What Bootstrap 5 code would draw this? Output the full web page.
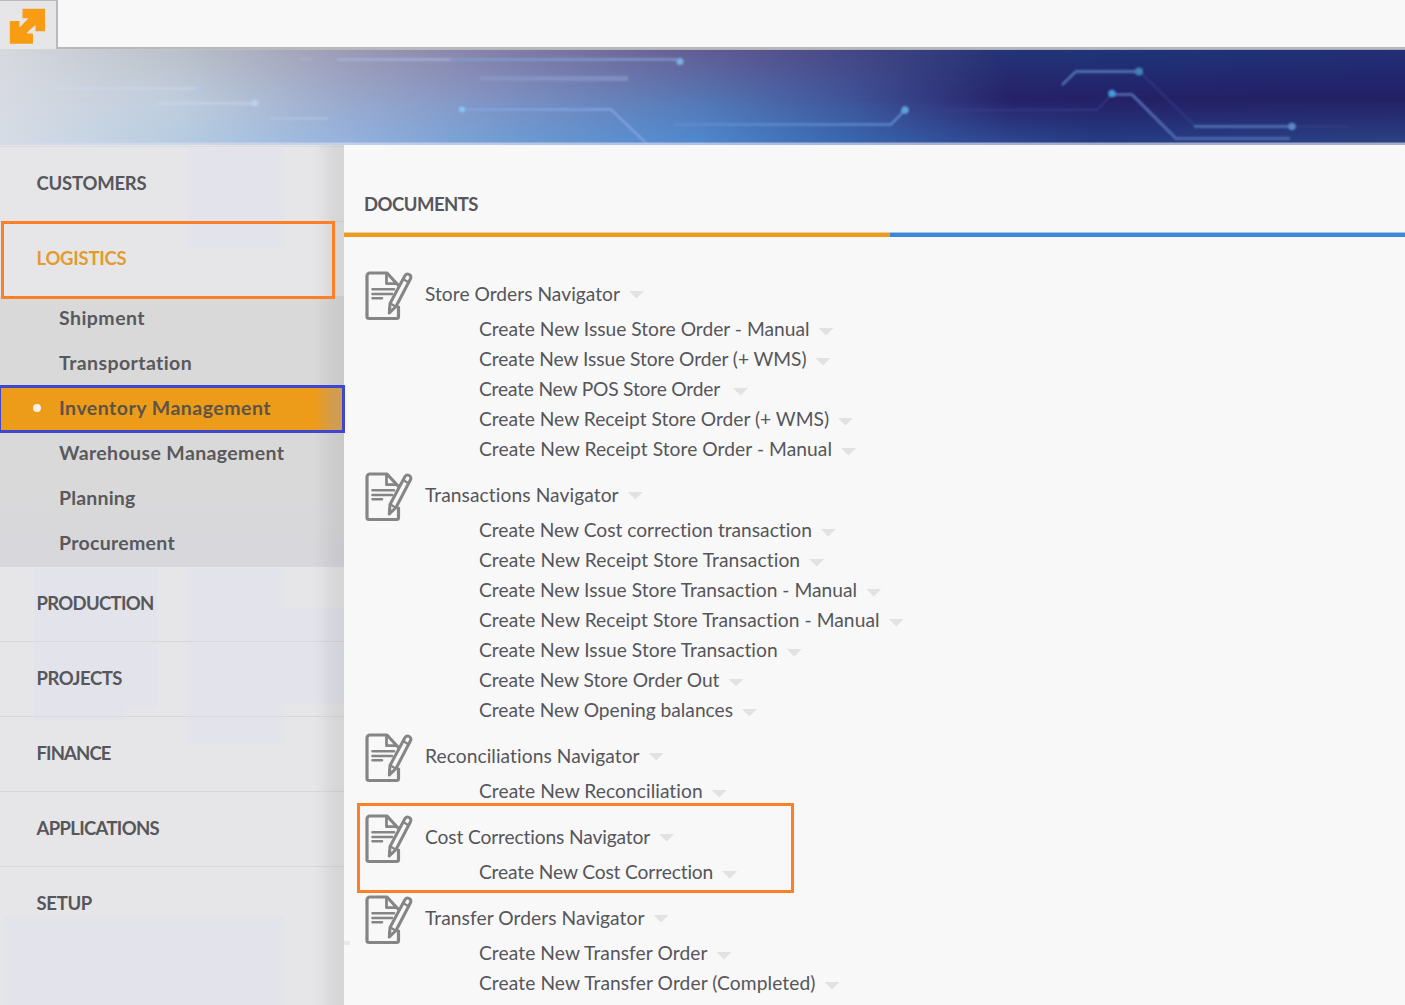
<!DOCTYPE html>
<html lang="en">
<head>
<meta charset="utf-8">
<meta name="viewport" content="width=device-width, initial-scale=1">
<title>Inventory Management</title>
<link href="https://cdn.jsdelivr.net/npm/bootstrap@5.3.0/dist/css/bootstrap.min.css" rel="stylesheet">
<style>
  body { font-family: Lato, "Open Sans", sans-serif; background: #f8f8f8; color: #55555a; width: 1405px; height: 1005px; overflow: hidden; font-size: 19.2px; }
  .fit { white-space: nowrap; display: inline-block; }
  .tabstrip { height: 49px; border-bottom: 2px solid #b9b9bb; }
  .home-tab { width: 58px; height: 49px; background: #e6e6e8; border-top: 1px solid #b9b9bb; border-right: 2px solid #b9b9bb; padding: 7px 0 0 9px; }
  .banner { height: 96px; padding-top: 1px; background: linear-gradient(90deg, #d8d9dc, #b9b9bb 20%, #a5a5b0); }
  .side { width: 344px; height: 860px; background: #e6e6e8; padding-top: 1px; }
  .side-wash { left: -2px; top: 0; }
  .side-shade { top: 0; right: 0; width: 30px; background: linear-gradient(90deg, rgba(120,120,120,0), rgba(110,110,110,.12) 65%, rgba(110,110,110,.14)); }
  .module { height: 75px; padding-left: 36.500px; padding-bottom: 1px; border-top: 1px solid #d8d8dc; font-weight: 700; font-size: 18.5px; color: #57575b; }
  .first-module { border-top-color: #dcdcde; }
  .module.active { color: #e39b30; }
  .submenu { height: 270px; background: linear-gradient(#d9d9da 75%, #d7d7dc); }
  .submenu a { height: 45px; padding-left: 59px; padding-bottom: 1px; font-weight: 700; font-size: 19.5px; color: #59595d; text-decoration: none; }
  .submenu a.current { background: #ed9c19; color: #5d5347; position: relative; }
  .current-dot { left: 33px; top: 18px; width: 8px; height: 8px; background: #f6f1e8; }
  .current-shade { right: 0; top: 0; width: 28px; background: linear-gradient(90deg, #ed9c19, #dfa24a 60%, #dca554); }
  .frame-blue { left: -2px; top: 240px; width: 347px; height: 48px; border: 3px solid #3f48cc; z-index: 3; }
  .frame-orange { border: 3px solid #ff7f27; z-index: 3; }
  .frame-module { left: 1px; top: 76px; width: 334px; height: 78px; }
  .frame-group { left: 13px; top: -3px; width: 437px; height: 90px; }
  .doc-title { height: 87px; padding: 45px 0 0 20px; font-weight: 700; font-size: 18.5px; line-height: 28px; color: #57575b; }
  .rule { height: 5px; background: linear-gradient(90deg, #ec9c20 546px, #3b87d9 546px); border-top: 1px solid rgba(248,248,248,.55); }
  .groups { padding-top: 26px; }
  .group-head { height: 51px; padding: 8px 0 0 20px; }
  .group-head .fit { margin-left: 11px; line-height: 45px; }
  .group-head svg.doc { width: 50px; height: 50px; flex: none; margin-top: -.5px; }
  .entry { height: 30px; padding-left: 135px; line-height: 28px; }
  .caret-down { width: 16px; height: 8px; background: #e2e2e3; clip-path: polygon(0 0, 100% 0, 50% 100%); margin-left: 8.5px; margin-top: 5px; flex: none; }
  .group-head .caret-down { margin-top: 19.500px; }
  .tick { left: 0; top: 796px; width: 6px; height: 4px; background: #e8e8e9; }
</style>
<script src="https://cdn.jsdelivr.net/npm/bootstrap@5.3.0/dist/js/bootstrap.bundle.min.js"></script>
</head>
<body>
<header class="tabstrip">
  <div class="home-tab">
    <svg width="38" height="38" viewBox="0 0 38 38" class="d-block"><path fill="#f89c14" d="M13.500 .7h22.500v22.500H26.500v-6.200L19.500 23l-2 2.500H24V35.700H.8V13H10.500v6.500L13 17l6.500-6.800H13.500z"/></svg>
  </div>
</header>
<div class="banner">
  <svg width="1405" height="95" class="d-block">
    <defs>
      <linearGradient id="topTone" gradientUnits="userSpaceOnUse" x1="0" x2="1405" y1="0" y2="0">
        <stop offset="0" stop-color="#d6d9df"/><stop offset=".128" stop-color="#b9c0c9"/><stop offset=".25" stop-color="#9a9ab5"/><stop offset=".37" stop-color="#7f7ba6"/><stop offset=".5" stop-color="#625c94"/><stop offset=".605" stop-color="#454785"/><stop offset=".71" stop-color="#253577"/><stop offset=".78" stop-color="#1f3679"/><stop offset="1" stop-color="#222f76"/>
      </linearGradient>
      <linearGradient id="midTone" gradientUnits="userSpaceOnUse" x1="0" x2="1405" y1="0" y2="0">
        <stop offset="0" stop-color="#d8dbe3"/><stop offset=".128" stop-color="#c0cddd"/><stop offset=".25" stop-color="#9aa8cc"/><stop offset=".37" stop-color="#7b8fc2"/><stop offset=".5" stop-color="#5577b5"/><stop offset=".605" stop-color="#405499"/><stop offset=".72" stop-color="#261f66"/><stop offset="1" stop-color="#231f65"/>
      </linearGradient>
      <linearGradient id="lowTone" gradientUnits="userSpaceOnUse" x1="0" x2="1405" y1="0" y2="0">
        <stop offset="0" stop-color="#d6dce5"/><stop offset=".128" stop-color="#b5cce1"/><stop offset=".25" stop-color="#93b2de"/><stop offset=".37" stop-color="#6b9bd3"/><stop offset=".5" stop-color="#4d88ce"/><stop offset=".605" stop-color="#3768b0"/><stop offset=".68" stop-color="#32519b"/><stop offset=".78" stop-color="#253f84"/><stop offset="1" stop-color="#2c4485"/>
      </linearGradient>
      <linearGradient id="fadeDown" x1="0" x2="0" y1="0" y2="1"><stop offset="0" stop-color="#fff"/><stop offset=".55" stop-color="#000"/></linearGradient>
      <linearGradient id="fadeUp" x1="0" x2="0" y1="0" y2="1"><stop offset=".5" stop-color="#000"/><stop offset="1" stop-color="#fff"/></linearGradient>
      <mask id="topMask"><rect width="1405" height="95" fill="url(#fadeDown)"/></mask>
      <mask id="lowMask"><rect width="1405" height="95" fill="url(#fadeUp)"/></mask>
      <filter id="soft" filterUnits="userSpaceOnUse" x="0" y="0" width="1405" height="95"><feGaussianBlur stdDeviation=".8"/></filter>
    </defs>
    <rect width="1405" height="95" fill="url(#midTone)"/>
    <rect width="1405" height="95" fill="url(#topTone)" mask="url(#topMask)"/>
    <rect width="1405" height="95" fill="url(#lowTone)" mask="url(#lowMask)"/>
    <g fill="none" stroke-width="2" filter="url(#soft)">
      <path d="M35 38.500H200M158 53.500H254" stroke="#cfdcee" opacity=".7"/>
      <path d="M270 68.500H328" stroke="#b2cbd9" opacity=".8"/>
      <path d="M300 9H312" stroke="#b0b4cf" opacity=".7"/>
      <path d="M337 9.500H450" stroke="#a9b2dc"/>
      <path d="M450 9.500H678" stroke="#83a0d0"/>
      <path d="M480 28.500H628" stroke="#8d9dcb" stroke-width="5" opacity=".6"/>
      <path d="M462 59.500H611L646 93" stroke="#83a5e2"/>
      <path d="M674 74.500H891L905 60" stroke="#6390d0"/>
      <path d="M906 60H1097L1112 44M1140 22L1195 76M1292 76.500H1349" stroke="#3d4588" opacity=".6"/>
      <path d="M1062 35L1076 21.500H1138" stroke="#587cbc" stroke-width="2.300"/>
      <path d="M1112 44.500H1132L1176 88.500H1290" stroke="#566eb4" stroke-width="2.600"/>
      <path d="M1194 76.500H1292" stroke="#5474bc" stroke-width="2.300"/>
    </g>
    <g fill="#60a0dc" filter="url(#soft)">
      <circle cx="680" cy="11.500" r="3.500" fill="#7fb0de"/><circle cx="462" cy="59.500" r="3" fill="#8cc4ee"/><circle cx="905" cy="60" r="3.800"/><circle cx="1139" cy="21.500" r="4" fill="#4181b9"/><circle cx="1112" cy="43.500" r="3.800" fill="#439ad8"/><circle cx="1292" cy="76.500" r="3.800" fill="#5b86c8"/><circle cx="200" cy="38.500" r="3.500" fill="#b5c5e2"/><circle cx="255" cy="53" r="3.500" fill="#bad0ec"/>
    </g>
    <rect y="92.500" width="1405" height="2.500" fill="#d8d8f0" opacity=".7"/>
  </svg>
</div>
<div class="d-flex">
  <nav class="side position-relative flex-shrink-0">
    <svg class="side-wash position-absolute" width="346" height="860" fill="#e3e3ec"><path d="M190 3H286V103H190zM36 423H159V562H127V576H36zM190 423H286V463H346V558H286V599H190zM6 772H286V860H6z"/></svg>
    <div class="position-relative">
      <div class="module first-module d-flex align-items-center"><span class="fit" data-w="110">CUSTOMERS</span></div>
      <div class="module active d-flex align-items-center"><span class="fit" data-w="90">LOGISTICS</span></div>
      <div class="submenu">
        <a class="d-flex align-items-center" href="#"><span class="fit" data-w="86">Shipment</span></a>
        <a class="d-flex align-items-center" href="#"><span class="fit" data-w="133.500">Transportation</span></a>
        <a class="current d-flex align-items-center" href="#"><i class="current-shade position-absolute h-100"></i><i class="current-dot position-absolute rounded-circle"></i><span class="fit" data-w="212">Inventory Management</span></a>
        <a class="d-flex align-items-center" href="#"><span class="fit" data-w="225.500">Warehouse Management</span></a>
        <a class="d-flex align-items-center" href="#"><span class="fit" data-w="76.500">Planning</span></a>
        <a class="d-flex align-items-center" href="#"><span class="fit" data-w="116">Procurement</span></a>
      </div>
      <div class="module d-flex align-items-center"><span class="fit" data-w="117">PRODUCTION</span></div>
      <div class="module d-flex align-items-center"><span class="fit" data-w="85.500">PROJECTS</span></div>
      <div class="module d-flex align-items-center"><span class="fit" data-w="74">FINANCE</span></div>
      <div class="module d-flex align-items-center"><span class="fit" data-w="122.500">APPLICATIONS</span></div>
      <div class="module d-flex align-items-center"><span class="fit" data-w="55.500">SETUP</span></div>
    </div>
    <div class="side-shade position-absolute h-100"></div>
    <div class="frame-orange frame-module position-absolute"></div>
    <div class="frame-blue position-absolute"></div>
  </nav>
  <main class="flex-grow-1 position-relative">
    <h1 class="doc-title m-0"><span class="fit" data-w="114">DOCUMENTS</span></h1>
    <div class="rule"></div>
    <div class="groups" id="groups"></div>
    <div class="tick position-absolute"></div>
  </main>
</div>
<template id="docIcon">
  <svg class="doc" viewBox="0 0 50 50" fill="none" stroke="#858585" stroke-width="3.200" stroke-linejoin="round" stroke-linecap="round">
    <path d="M34.500 36V45.500a2 2 0 0 1-2 2H5a2 2 0 0 1-2-2V5a3 3 0 0 1 3-3H23L34 14"/>
    <path d="M22.500 3V12.700H32" stroke-width="2.800"/>
    <path d="M8.500 18.300H30M8.500 23H28M8.500 27.300H18" stroke-width="2.600"/>
    <path d="M26 32.500L41 4.500a3.200 3.200 0 0 1 5.600 3L32 35.500L25.300 42z" fill="#f8f8f8" stroke-width="3"/>
    <path d="M40 8.500L44 11M26.500 32.500l5 3" stroke-width="2.200"/>
    <path d="M25 37l4 2-4 3z" fill="#858585" stroke-width="1"/>
  </svg>
</template>
<script>
  // Each row: label, label width in px, optional extra gap before the caret
  const groups = [
    { head: ["Store Orders Navigator", 195], items: [["Create New Issue Store Order - Manual", 330.5], ["Create New Issue Store Order (+ WMS)", 327.5], ["Create New POS Store Order", 241, 5], ["Create New Receipt Store Order (+ WMS)", 350], ["Create New Receipt Store Order - Manual", 353]] },
    { head: ["Transactions Navigator", 194], items: [["Create New Cost correction transaction", 333.5], ["Create New Receipt Store Transaction", 321.5], ["Create New Issue Store Transaction - Manual", 378.5], ["Create New Receipt Store Transaction - Manual", 401], ["Create New Issue Store Transaction", 299], ["Create New Store Order Out", 240.5], ["Create New Opening balances", 254]] },
    { head: ["Reconciliations Navigator", 215], items: [["Create New Reconciliation", 224]] },
    { head: ["Cost Corrections Navigator", 225.5], items: [["Create New Cost Correction", 234.5]], marked: true },
    { head: ["Transfer Orders Navigator", 219.5], items: [["Create New Transfer Order", 228.5], ["Create New Transfer Order (Completed)", 336.5]] }
  ];
  const icon = document.getElementById("docIcon").innerHTML;
  const label = ([text, w, gap]) => `<span class="fit" data-w="${w}">${text}</span>` + (gap ? `<span class="ps-1"></span>` : "") + `<i class="caret-down"></i>`;
  document.getElementById("groups").innerHTML = groups.map(g => `
    <section class="position-relative">
      ${g.marked ? '<div class="frame-orange frame-group position-absolute"></div>' : ""}
      <div class="group-head d-flex align-items-start">${icon}${label(g.head)}</div>
      ${g.items.map(i => `<div class="entry d-flex align-items-center">${label(i)}</div>`).join("")}
    </section>`).join("");
  document.querySelectorAll(".fit").forEach(el => {
    const gap = (el.dataset.w - el.getBoundingClientRect().width) / el.textContent.length;
    el.style.letterSpacing = gap.toFixed(3) + "px";
  });
</script>
</body>
</html>
